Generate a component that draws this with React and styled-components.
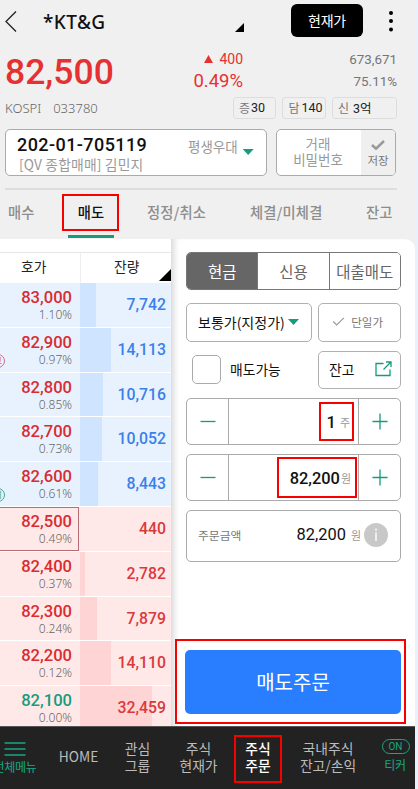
import styled, { createGlobalStyle, css } from "styled-components";

const KR = `"Noto Sans CJK KR", sans-serif`;
const NUM = `Roboto, "Noto Sans CJK KR", sans-serif`;
const RED = "#e53131";
const GREEN = "#159c7c";

const GlobalStyle = createGlobalStyle`
  * {
    box-sizing: border-box;
  }

  body {
    margin: 0;
    background: #ebf1fb;
    font-family: ${KR};
    overflow: hidden;
  }

  button {
    font: inherit;
    color: inherit;
    background: none;
    border: 0;
    padding: 0;
  }
`;

/* ===== Screen ===== */
const Screen = styled.div`
  width: 415px;
  height: 789px;
  background: #f0f0f0;
  overflow: hidden;
  display: flex;
  flex-direction: column;
  white-space: nowrap;
`;

/* Red marker drawn around a control */
const marked = css`
  position: relative;

  &::after {
    content: "";
    position: absolute;
    inset: ${({ $mark }) => $mark || "0"};
    border: 2px solid #f80000;
    pointer-events: none;
  }
`;

/* ===== Title bar ===== */
const TitleBar = styled.header`
  height: 44px;
  display: flex;
  align-items: flex-start;
  flex-shrink: 0;
`;

const BackIcon = styled.svg`
  flex-shrink: 0;
  margin: 11px 0 0 5px;
`;

const StockName = styled.h1`
  margin: 9px 0 0 26px;
  width: 192px;
  font-family: "Noto Sans", ${KR};
  font-size: 19px;
  line-height: 27px;
  font-weight: 500;
  letter-spacing: 0.4px;
  color: #111;
`;

const Corner = styled.span`
  width: 9px;
  height: 9px;
  margin-top: ${({ $top }) => $top || 0}px;
  background: #000;
  clip-path: polygon(100% 0, 100% 100%, 0 100%);
`;

const PriceButton = styled.button`
  width: 72px;
  height: 33px;
  margin: 4px 0 0 47px;
  border-radius: 6px;
  background: #000;
  color: #fff;
  font-size: 14px;
  line-height: 31px;
  letter-spacing: -0.2px;
`;

const MoreIcon = styled.svg`
  margin: 10px 0 0 25px;
`;

/* ===== Quote ===== */
const Quote = styled.section`
  height: 85px;
  display: flex;
  flex-shrink: 0;
  padding-left: 5px;
`;

const QuoteMain = styled.div`
  width: 158px;
`;

const Price = styled.div`
  font-family: ${NUM};
  font-size: 35.5px;
  line-height: 40px;
  margin-top: 8px;
  font-weight: 500;
  color: ${RED};
`;

const Market = styled.div`
  font-family: "Noto Sans", ${KR};
  font-weight: 300;
  font-size: 13px;
  line-height: 18px;
  margin-top: 7px;
  color: #666;

  span {
    margin-left: 12px;
  }
`;

const QuoteSide = styled.div`
  width: 234px;
`;

const QuoteLine = styled.div`
  display: flex;
  justify-content: space-between;
  align-items: center;
  height: ${({ $h }) => $h}px;
  margin-top: ${({ $top }) => $top || 0}px;
`;

const Change = styled.span`
  display: flex;
  align-items: center;
  justify-content: flex-end;
  gap: 6px;
  width: 80px;
  font-family: ${NUM};
  font-size: ${({ $size }) => $size}px;
  color: ${RED};
`;

const Volume = styled.span`
  font-family: ${NUM};
  font-size: 13.4px;
  color: #757575;
`;

const Chips = styled.div`
  display: flex;
  gap: 6px;
  margin: 4px 0 0 70px;
`;

const Chip = styled.span`
  width: ${({ $w }) => $w}px;
  height: 22px;
  padding: 0 0 1px 5px;
  border: 1px solid #ddd;
  border-radius: 3px;
  display: flex;
  align-items: center;
  gap: ${({ $gap }) => $gap}px;
  font-size: 12px;
  color: #777;

  b {
    font-family: ${NUM};
    font-size: 12.5px;
    font-weight: 400;
    color: #222;
  }
`;

/* ===== Account ===== */
const AccountRow = styled.section`
  display: flex;
  gap: 9px;
  height: 61px;
  margin-left: 5px;
  width: 392px;
  flex-shrink: 0;
  border-bottom: 2px solid #dedede;
`;

const AccountBox = styled.div`
  width: 262px;
  height: 47px;
  padding: 5px 11px 0 11px;
  display: flex;
  background: #fff;
  border: 1px solid #aaa;
  border-radius: 5px;
`;

const AccountInfo = styled.div`
  width: 171px;
`;

const AccountNumber = styled.div`
  font-family: ${NUM};
  font-size: 18px;
  line-height: 20px;
  letter-spacing: 0.42px;
  font-weight: 500;
  color: #111;
`;

const AccountOwner = styled.div`
  font-size: 13.8px;
  line-height: 18px;
  padding-left: 2px;
  letter-spacing: 0.15px;
  color: #999;
`;

const Grade = styled.div`
  display: flex;
  gap: 5px;
  font-size: 13.5px;
  line-height: 23px;
  color: #999;
`;

const Down = styled.i`
  width: 11px;
  height: 6px;
  flex-shrink: 0;
  margin-top: ${({ $top }) => $top || 0}px;
  background: ${GREEN};
  clip-path: polygon(0 0, 100% 0, 50% 100%);
`;

const PasswordBox = styled.div`
  width: 120px;
  height: 47px;
  display: flex;
  background: #fff;
  border: 1px solid #aaa;
  border-radius: 5px;
  overflow: hidden;
`;

const PasswordHint = styled.div`
  flex: 1;
  padding: 5px 2px 0 0;
  text-align: center;
  font-size: 13.5px;
  line-height: 16px;
  color: #999;
`;

const SaveCell = styled.div`
  width: 34px;
  padding-top: 10px;
  display: flex;
  flex-direction: column;
  align-items: center;
  gap: 4px;
  background: #efefef;
  font-size: 11.5px;
  line-height: 12px;
  color: #777;
`;

/* ===== Tabs ===== */
const Tabs = styled.nav`
  display: flex;
  height: 49px;
  flex-shrink: 0;
  padding-left: 8px;
`;

const Tab = styled.button`
  width: ${({ $w }) => $w}px;
  margin-right: ${({ $gap }) => $gap}px;
  height: 48px;
  padding-bottom: 5px;
  font-size: 14.3px;
  font-weight: 500;
  letter-spacing: 0.2px;
  text-align: ${({ $active }) => ($active ? "center" : "left")};
  color: ${({ $active }) => ($active ? "#111" : "#8d8d8d")};
  ${({ $active }) =>
    $active &&
    css`
      ${marked}
      border-bottom: 3px solid ${GREEN};
      padding-bottom: 2px;
    `}
`;

/* ===== Body ===== */
const Body = styled.main`
  display: flex;
  height: 487px;
  flex-shrink: 0;
  background: #fff;
  border-top-right-radius: 10px;
`;

/* ===== Order book ===== */
const Book = styled.section`
  width: 171px;
  padding-top: 13px;
`;

const BookHead = styled.div`
  display: flex;
  height: 31px;
  border-top: 1px solid #e6e6e6;
  font-size: 13.8px;
  line-height: 27px;
  color: #222;
`;

const HeadCell = styled.div`
  width: ${({ $w }) => $w}px;
  display: flex;
  padding-left: ${({ $pad }) => $pad}px;
  border-right: 1px solid #eee;

  &:last-child {
    border-right: 0;
    justify-content: space-between;
  }
`;

const BookCorner = styled(Corner)`
  width: 12px;
  height: 12px;
  margin-top: 16px;
`;

const BookRow = styled.div`
  display: flex;
  height: 44.8px;
  border-bottom: 1px solid #fff;
  background: ${({ $side }) => ($side === "ask" ? "#e8f2ff" : "#ffe9e8")};
`;

const QuoteCell = styled.div`
  position: relative;
  width: 79px;
  padding: 4px 6px 0 0;
  text-align: right;
  border: 1px solid ${({ $current }) => ($current ? "#b86c74" : "transparent")};
  border-left: 0;
`;

const RowPrice = styled.div`
  font-family: ${NUM};
  font-size: 16.6px;
  line-height: 19px;
  font-weight: 500;
  color: ${({ $flat }) => ($flat ? GREEN : "#d82c30")};
`;

const RowRate = styled.div`
  font-family: "Noto Sans", ${KR};
  font-weight: 300;
  font-size: 12px;
  line-height: 15px;
  color: #666;
`;

const Flag = styled.span`
  position: absolute;
  left: -9px;
  bottom: 3px;
  width: 14px;
  height: 14px;
  border: 1px solid ${({ $color }) => $color};
  border-radius: 50%;
  color: ${({ $color }) => $color};
  font-size: 9px;
  line-height: 11px;
  text-align: center;
`;

const AmountCell = styled.div`
  flex: 1;
  margin-left: 1px;
  padding-right: 5px;
  text-align: right;
  font-family: ${NUM};
  font-size: 15.8px;
  line-height: 44px;
  font-weight: 500;
  color: ${({ $side }) => ($side === "ask" ? "#3a80ea" : "#d83a3c")};
  background-image: linear-gradient(
    ${({ $side }) => ($side === "ask" ? "#cfe4ff, #cfe4ff" : "#ffd4d4, #ffd4d4")}
  );
  background-repeat: no-repeat;
`;

/* ===== Order form ===== */
const Form = styled.section`
  flex: 1;
  padding: 13px 9px 0 15px;
  box-shadow: inset 7px 0 6px -4px #d8d8d8;
`;

const FormRow = styled.div`
  display: flex;
  width: 215px;
  height: ${({ $h }) => $h}px;
  margin-bottom: ${({ $gap }) => $gap}px;
`;

const Segments = styled(FormRow)`
  border: 1px solid #777;
  border-radius: 5px;
  overflow: hidden;
`;

const Segment = styled.button`
  flex: 1;
  font-size: 15.5px;
  line-height: 33px;
  color: ${({ $on }) => ($on ? "#fff" : "#666")};
  background: ${({ $on }) => ($on ? "#666" : "#fff")};

  & + & {
    border-left: 1px solid #777;
  }
`;

const Field = styled.div`
  width: ${({ $w }) => $w}px;
  display: flex;
  align-items: center;
  padding: ${({ $pad }) => $pad};
  justify-content: space-between;
  border: 1px solid #b0b0b0;
  border-radius: 5px;
  font-size: ${({ $size }) => $size || 13.8}px;
  color: ${({ $muted }) => ($muted ? "#777" : "#111")};

  & + & {
    margin-left: 6px;
  }
`;

const CheckLabel = styled.label`
  width: 132px;
  padding: 0 0 1px 6px;
  display: flex;
  align-items: center;
  gap: 9px;
  font-size: 13.8px;
  line-height: 22px;
  color: #111;

  em {
    font-style: normal;
    padding-bottom: 2px;
  }
`;

const Checkbox = styled.span`
  width: 29px;
  height: 29px;
  border: 1px solid #aaa;
  border-radius: 5px;
`;

const Stepper = styled(FormRow)`
  border: 1px solid #aaa;
  border-radius: 5px;
`;

const StepButton = styled.button`
  width: 41px;
  display: flex;
  align-items: center;
  justify-content: center;
`;

const StepValue = styled.div`
  flex: 1;
  display: flex;
  align-items: center;
  justify-content: flex-end;
  border: solid #aaa;
  border-width: 0 1px;
`;

const Value = styled.div`
  ${marked}
  height: ${({ $h }) => $h}px;
  margin-right: ${({ $right }) => $right}px;
  padding: 1px ${({ $pad }) => $pad}px 0 13px;
  display: flex;
  align-items: center;
  gap: ${({ $gap }) => $gap}px;
  font-family: ${NUM};
  font-size: 16.4px;
  font-weight: 500;
  color: #111;
`;

const Unit = styled.span`
  font-family: ${KR};
  font-size: 11px;
  font-weight: 400;
  color: #999;
`;

const Total = styled(FormRow)`
  align-items: center;
  border: 1px solid #aaa;
  border-radius: 5px;
  padding: 0 12px 3px 11px;
  font-size: 11.8px;
  color: #777;
`;

const TotalValue = styled.span`
  margin-left: auto;
  margin-right: 5px;
  font-family: ${NUM};
  font-size: 16.4px;
  color: #111;
`;

const InfoIcon = styled.svg`
  margin-left: 3px;
`;

const SubmitArea = styled.div`
  ${marked}
  width: 231px;
  height: 85px;
  margin-left: -11px;
  padding: 11px 0 0 10px;
`;

const SubmitButton = styled.button`
  width: 216px;
  height: 64px;
  border-radius: 5px;
  background: #287eff;
  color: #fff;
  font-size: 20px;
  line-height: 60px;
`;

/* ===== Bottom navigation ===== */
const BottomNav = styled.nav`
  display: flex;
  height: 63px;
  flex-shrink: 0;
  background: #222;
  border-top: 1px solid #555;
`;

const NavItem = styled.button`
  position: relative;
  width: ${({ $w }) => $w}px;
  display: flex;
  flex-direction: column;
  align-items: center;
  flex-shrink: 0;
  padding-top: ${({ $top }) => $top || 13}px;
  font-size: 13.8px;
  line-height: 17px;
  color: ${({ $active, $green }) => ($active ? "#fff" : $green ? "#18a783" : "#bcbcbc")};
  font-weight: ${({ $active }) => ($active ? 500 : 400)};
  ${({ $active }) => $active && marked}

  & + &::before {
    content: "";
    position: absolute;
    left: 0;
    top: 13px;
    height: 38px;
    border-left: 1px solid #2b2b2b;
  }
`;

/* Runs past the left edge of the screen */
const MenuItem = styled(NavItem)`
  margin-left: -8px;
  width: 53px;
  padding-right: 8px;
`;

const MenuLabel = styled.span`
  font-size: 12px;
  line-height: 16px;
  margin: 3px 0 0 1px;
  letter-spacing: -0.3px;
`;

const OnBadge = styled.span`
  width: 28px;
  height: 15px;
  margin-left: 2px;
  border: 1px solid #18a783;
  border-radius: 8px;
  font-family: ${NUM};
  font-size: 10px;
  line-height: 14px;
  text-align: center;
`;

const rows = [
  { price: "83,000", rate: "1.10%", amount: "7,742", side: "ask", bar: 16 },
  { price: "82,900", rate: "0.97%", amount: "14,113", side: "ask", bar: 31, flag: ["고", "#d86a78"] },
  { price: "82,800", rate: "0.85%", amount: "10,716", side: "ask", bar: 23 },
  { price: "82,700", rate: "0.73%", amount: "10,052", side: "ask", bar: 22 },
  { price: "82,600", rate: "0.61%", amount: "8,443", side: "ask", bar: 18, flag: ["시", "#3aa98c"] },
  { price: "82,500", rate: "0.49%", amount: "440", side: "bid", bar: 0, current: true },
  { price: "82,400", rate: "0.37%", amount: "2,782", side: "bid", bar: 5 },
  { price: "82,300", rate: "0.24%", amount: "7,879", side: "bid", bar: 17 },
  { price: "82,200", rate: "0.12%", amount: "14,110", side: "bid", bar: 31 },
  { price: "82,100", rate: "0.00%", amount: "32,459", side: "bid", bar: 72, flat: true },
];

function Check({ width = 14, height = 10, stroke = 2.5 }) {
  return (
    <svg width={width} height={height} viewBox="0 0 14 10">
      <path d="M1 5 L5 8.7 L13 1" fill="none" stroke="#999" strokeWidth={stroke} />
    </svg>
  );
}

function StepIcon({ plus }) {
  return (
    <svg width="16" height="18" viewBox="0 0 16 18">
      <path
        d={plus ? "M0.5 8.5H15.5M8 0.5V16.5" : "M0.5 8.5H15.5"}
        stroke={GREEN}
        strokeWidth="1.3"
      />
    </svg>
  );
}

function OrderBook() {
  return (
    <Book>
      <BookHead>
        <HeadCell $w={81} $pad={21}>호가</HeadCell>
        <HeadCell $w={90} $pad={33}>
          잔량
          <BookCorner />
        </HeadCell>
      </BookHead>
      {rows.map((row) => (
        <BookRow key={row.price} $side={row.side}>
          <QuoteCell $current={row.current}>
            <RowPrice $flat={row.flat}>{row.price}</RowPrice>
            <RowRate>{row.rate}</RowRate>
            {row.flag && <Flag $color={row.flag[1]}>{row.flag[0]}</Flag>}
          </QuoteCell>
          <AmountCell $side={row.side} style={{ backgroundSize: `${row.bar}px 100%` }}>
            {row.amount}
          </AmountCell>
        </BookRow>
      ))}
    </Book>
  );
}

function OrderForm() {
  return (
    <Form>
      <Segments $h={38} $gap={13}>
        <Segment $on>현금</Segment>
        <Segment>신용</Segment>
        <Segment>대출매도</Segment>
      </Segments>

      <FormRow $h={39} $gap={9}>
        <Field $w={126} $pad="0 12px 2px 11px" $size={14}>
          보통가(지정가)
          <Down $top={1} />
        </Field>
        <Field $w={83} $pad="0 17px 2px 13px" $size={11.5} $muted>
          <Check width={13} height={9} stroke={1.3} />
          단일가
        </Field>
      </FormRow>

      <FormRow $h={38} $gap={9}>
        <CheckLabel>
          <Checkbox />
          <em>매도가능</em>
        </CheckLabel>
        <Field $w={83} $pad="0 8px 2px 10px">
          잔고
          <svg width="17" height="16" viewBox="0 0 17 16">
            <path
              d="M8.5 2.5H1V14.5H15V8.5M8.5 8.5L15.5 1.5M11 1H16V6"
              fill="none"
              stroke={GREEN}
              strokeWidth="1.3"
            />
          </svg>
        </Field>
      </FormRow>

      <Stepper $h={47} $gap={9}>
        <StepButton><StepIcon /></StepButton>
        <StepValue>
          <Value $h={39} $right={4} $pad={4} $gap={4} $mark="0 0 0 5px">
            1<Unit>주</Unit>
          </Value>
        </StepValue>
        <StepButton><StepIcon plus /></StepButton>
      </Stepper>

      <Stepper $h={47} $gap={9}>
        <StepButton><StepIcon /></StepButton>
        <StepValue>
          <Value $h={41} $right={1} $pad={6} $gap={1}>
            82,200<Unit>원</Unit>
          </Value>
        </StepValue>
        <StepButton><StepIcon plus /></StepButton>
      </Stepper>

      <Total $h={52} $gap={77}>
        주문금액
        <TotalValue>82,200</TotalValue>
        <Unit>원</Unit>
        <InfoIcon width="24" height="24" viewBox="0 0 24 24">
          <circle cx="12" cy="12" r="12" fill="#c8c8c8" />
          <path d="M12 9.5V18M12 5.5V7.7" stroke="#eee" strokeWidth="2" />
        </InfoIcon>
      </Total>

      <SubmitArea>
        <SubmitButton>매도주문</SubmitButton>
      </SubmitArea>
    </Form>
  );
}

export default function App() {
  return (
    <>
      <GlobalStyle />
      <Screen>
        <TitleBar>
          <BackIcon width="12" height="22" viewBox="0 0 12 22">
            <path d="M11 0.5L1 10.5L11 20.5" fill="none" stroke="#222" strokeWidth="1.3" />
          </BackIcon>
          <StockName>*KT&amp;G</StockName>
          <Corner $top={23} />
          <PriceButton>현재가</PriceButton>
          <MoreIcon width="6" height="22" viewBox="0 0 6 22">
            <circle cx="3" cy="3" r="2" />
            <circle cx="3" cy="11" r="2" />
            <circle cx="3" cy="19.5" r="2" />
          </MoreIcon>
        </TitleBar>

        <Quote>
          <QuoteMain>
            <Price>82,500</Price>
            <Market>
              KOSPI<span>033780</span>
            </Market>
          </QuoteMain>
          <QuoteSide>
            <QuoteLine $h={20} $top={5}>
              <Change $size={14}>
                <svg width="9" height="8" viewBox="0 0 9 8">
                  <path d="M4.5 0L9 8H0Z" fill={RED} />
                </svg>
                400
              </Change>
              <Volume>673,671</Volume>
            </QuoteLine>
            <QuoteLine $h={24}>
              <Change $size={18.5}>0.49%</Change>
              <Volume>75.11%</Volume>
            </QuoteLine>
            <Chips>
              <Chip $w={44} $gap={1}>증<b>30</b></Chip>
              <Chip $w={44} $gap={2}>담<b>140</b></Chip>
              <Chip $w={66} $gap={4}>신<b>3억</b></Chip>
            </Chips>
          </QuoteSide>
        </Quote>

        <AccountRow>
          <AccountBox>
            <AccountInfo>
              <AccountNumber>202-01-705119</AccountNumber>
              <AccountOwner>[QV 종합매매] 김민지</AccountOwner>
            </AccountInfo>
            <Grade>
              평생우대
              <Down $top={14} />
            </Grade>
          </AccountBox>
          <PasswordBox>
            <PasswordHint>
              거래
              <br />
              비밀번호
            </PasswordHint>
            <SaveCell>
              <Check />
              저장
            </SaveCell>
          </PasswordBox>
        </AccountRow>

        <Tabs>
          <Tab $w={30} $gap={30}>매수</Tab>
          <Tab $w={46} $gap={33} $active $mark="4px -5px 4px -6px">매도</Tab>
          <Tab $w={64} $gap={39}>정정/취소</Tab>
          <Tab $w={77} $gap={39}>체결/미체결</Tab>
          <Tab $w={30} $gap={0}>잔고</Tab>
        </Tabs>

        <Body>
          <OrderBook />
          <OrderForm />
        </Body>

        <BottomNav>
          <MenuItem $top={15} $green>
            <svg width="22" height="14" viewBox="0 0 22 14">
              <path d="M0.5 1H21.5M0.5 7H21.5M0.5 13H21.5" stroke="#18a783" strokeWidth="1.6" />
            </svg>
            <MenuLabel>전체메뉴</MenuLabel>
          </MenuItem>
          <NavItem $w={67} $top={21}>HOME</NavItem>
          <NavItem $w={51}>관심<br />그룹</NavItem>
          <NavItem $w={71}>주식<br />현재가</NavItem>
          <NavItem $w={48} $active $mark="8px 0 6px">주식<br />주문</NavItem>
          <NavItem $w={92}>국내주식<br />잔고/손익</NavItem>
          <NavItem $w={41} $top={12} $green>
            <OnBadge>ON</OnBadge>
            <MenuLabel>티커</MenuLabel>
          </NavItem>
        </BottomNav>
      </Screen>
    </>
  );
}
